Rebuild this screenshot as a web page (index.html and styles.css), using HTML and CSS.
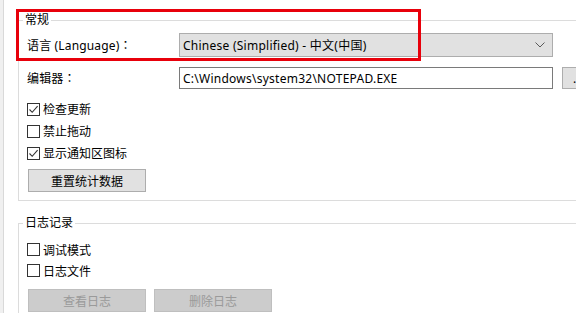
FILE: index.html
```html
<!DOCTYPE html>
<html>
    <head>
        <meta charset="utf-8">
        <title>设置</title>
        <meta name="viewport" content="width=device-width, initial-scale=1">
        <link rel="stylesheet" href="styles.css">
    </head>
    <body>
        <div class="window">
            <div class="strip"></div>
            <div class="page">
                <fieldset class="group">
                    <legend>常规</legend>
                    <div class="field">
                        <span class="field-label">语言 (Language)<span class="colon">：</span></span>
                        <div class="combo">
                            <span>Chinese (Simplified) - 中文(中国)</span>
                            <svg class="chevron" width="10" height="6" viewBox="0 0 10 6"><path d="M0.5 0.5 L5 5 L9.5 0.5" fill="none" stroke="#5a5a5a" stroke-width="1"/></svg>
                        </div>
                    </div>
                    <div class="field field-editor">
                        <span class="field-label">编辑器<span class="colon">：</span></span>
                        <div class="textbox">C:\Windows\system32\NOTEPAD.EXE</div>
                        <button class="btn browse">...</button>
                    </div>
                    <div class="checks">
                        <label class="check">
                            <span class="box"><svg width="11" height="11" viewBox="0 0 11 11"><path d="M1.5 5.5 L4.2 8.3 L9.6 2.2" fill="none" stroke="#333" stroke-width="1.1"/></svg></span>检查更新
                        </label>
                        <label class="check">
                            <span class="box"></span>禁止拖动
                        </label>
                        <label class="check">
                            <span class="box"><svg width="11" height="11" viewBox="0 0 11 11"><path d="M1.5 5.5 L4.2 8.3 L9.6 2.2" fill="none" stroke="#333" stroke-width="1.1"/></svg></span>显示通知区图标
                        </label>
                    </div>
                    <div class="actions">
                        <button class="btn">重置统计数据</button>
                    </div>
                </fieldset>

                <fieldset class="group group-log">
                    <legend>日志记录</legend>
                    <div class="checks checks-tight">
                        <label class="check"><span class="box"></span>调试模式</label>
                        <label class="check"><span class="box"></span>日志文件</label>
                    </div>
                    <div class="actions">
                        <button class="btn" disabled>查看日志</button>
                        <button class="btn" disabled>删除日志</button>
                    </div>
                </fieldset>
            </div>
            <!-- annotation frame over the first row -->
            <div class="highlight"></div>
        </div>
    </body>
</html>
```

FILE: styles.css
```css
*{
    box-sizing: border-box;
}
body{
    margin: 0;
    background: #fff;
    font-family: "Noto Sans", "Noto Sans CJK SC", sans-serif;
    font-size: 12px;
    color: #000;
}
.window{
    position: relative;
    display: flex;
    width: 576px;
    height: 313px;
    overflow: hidden;
}
.strip{
    flex: none;
    width: 4px;
    background: #f0f0f0;
    border-right: 1px solid #d9d9d9;
}
.page{
    flex: none;
    width: 620px;
    padding: 12px 0 0 14px;
}
.group{
    margin: 0;
    padding: 5px 8px 8px 8px;
    border: 1px solid #dcdcdc;
}
.group legend{
    margin-left: -4px;
    padding: 0 2px;
    line-height: 16px;
}
.group-log{
    margin-top: 14px;
    padding-top: 8px;
}
.field{
    display: flex;
    align-items: center;
    height: 24px;
}
.field-editor{
    margin-top: 10px;
    height: 22px;
}
.field-label{
    flex: none;
    width: 152px;
    letter-spacing: 0.15px;
}
.colon{
    font-family: "Noto Sans CJK TC", sans-serif;
    letter-spacing: 0;
}
.combo{
    display: flex;
    align-items: center;
    justify-content: space-between;
    width: 374px;
    height: 24px;
    padding: 0 7px 0 3px;
    background: #e1e1e1;
    border: 1px solid #adadad;
    letter-spacing: 0.25px;
}
.textbox{
    display: flex;
    align-items: center;
    width: 374px;
    height: 22px;
    padding-left: 3px;
    border: 1px solid #7a7a7a;
    background: #fff;
    letter-spacing: 0.25px;
}
.btn{
    width: 118px;
    height: 23px;
    padding: 0;
    font: inherit;
    color: #000;
    background: #e1e1e1;
    border: 1px solid #adadad;
}
.btn:disabled{
    color: #9a9a9a;
    background: #cccccc;
    border-color: #bfbfbf;
}
.browse{
    width: 24px;
    height: 22px;
    margin-left: 9px;
    text-align: left;
    padding-left: 10px;
}
.checks{
    margin-top: 9px;
}
.checks-tight{
    margin-top: 0;
}
.check{
    display: flex;
    align-items: center;
    height: 22px;
}
.checks-tight .check{
    height: 21px;
}
.box{
    display: flex;
    align-items: center;
    justify-content: center;
    width: 13px;
    height: 13px;
    margin-right: 3px;
    border: 1px solid #333;
    background: #fff;
}
.actions{
    display: flex;
    gap: 8px;
    margin-top: 5px;
    padding-left: 1px;
}
.group-log .actions{
    margin-top: 8px;
}
.highlight{
    position: absolute;
    left: 16px;
    top: 9px;
    width: 405px;
    height: 52px;
    border: 3px solid #e8000b;
    pointer-events: none;
}
```
